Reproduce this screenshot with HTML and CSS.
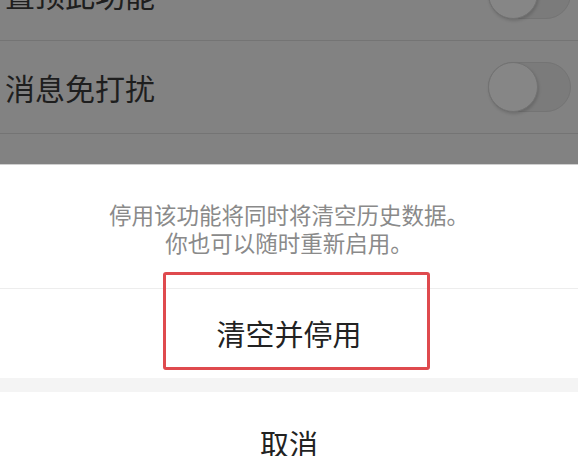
FILE: index.html
```html
<!DOCTYPE html>
<html lang="zh-CN">
<head>
    <meta charset="UTF-8">
    <meta name="viewport" content="width=device-width, initial-scale=1.0">
    <title>停用功能</title>
    <link rel="stylesheet" href="styles.css">
</head>
<body>
    <div class="screen">
        <!-- 背景设置列表（被遮罩） -->
        <div class="settings">
            <div class="setting-row">
                <span class="setting-label">置顶此功能</span>
                <span class="switch"><span class="knob"></span></span>
            </div>
            <div class="setting-row">
                <span class="setting-label">消息免打扰</span>
                <span class="switch"><span class="knob"></span></span>
            </div>
        </div>

        <!-- 底部操作菜单 -->
        <div class="action-sheet">
            <p class="sheet-tip">停用该功能将同时将清空历史数据。<br>你也可以随时重新启用。</p>
            <div class="sheet-action">
                清空并停用
                <span class="highlight-box"></span>
            </div>
            <div class="sheet-gap"></div>
            <div class="sheet-cancel">取消</div>
        </div>
    </div>
</body>
</html>
```

FILE: styles.css
```css
/* 重置默认样式 */
* {
    margin: 0;
    padding: 0;
    box-sizing: border-box;
    font-family: 'Noto Sans CJK SC', 'Noto Sans', sans-serif;
}

body {
    background: #ffffff;
    width: 578px;
    height: 456px;
    overflow: hidden;
}

.screen {
    width: 578px;
    height: 456px;
    display: flex;
    flex-direction: column;
    overflow: hidden;
}

/* 遮罩后的设置列表 */
.settings {
    height: 164px;
    flex-shrink: 0;
    background: #828282;
    overflow: hidden;
}

.setting-row {
    height: 93px;
    display: flex;
    align-items: center;
    justify-content: space-between;
    padding: 0 7px 0 5px;
    border-bottom: 1px solid #747474;
}

.setting-row:first-child {
    margin-top: -52px;
}

.setting-label {
    font-size: 30px;
    color: #1e1e1e;
    line-height: 1;
}

.switch {
    position: relative;
    width: 83px;
    height: 50px;
    border-radius: 25px;
    background: #7b7b7b;
    border: 1px solid #747474;
}

.knob {
    position: absolute;
    left: -1px;
    top: -1px;
    width: 50px;
    height: 50px;
    border-radius: 50%;
    background: #868686;
    border: 1px solid #727272;
    box-shadow: 1px 2px 3px rgba(0, 0, 0, 0.15);
}

/* 底部菜单 */
.action-sheet {
    flex: 1;
    min-height: 0;
    background: #ffffff;
    border-top: 1px solid #cfcfcf;
    display: flex;
    flex-direction: column;
}

.sheet-tip {
    height: 124px;
    flex-shrink: 0;
    display: flex;
    align-items: center;
    justify-content: center;
    text-align: center;
    font-size: 22.5px;
    line-height: 28px;
    color: #8a8a8a;
    border-bottom: 1px solid #ededed;
    padding-top: 2px;
}

.sheet-action {
    position: relative;
    height: 89px;
    flex-shrink: 0;
    display: flex;
    align-items: center;
    justify-content: center;
    font-size: 29px;
    color: #222222;
    padding-bottom: 2px;
}

.highlight-box {
    position: absolute;
    left: 163px;
    top: -17px;
    width: 267px;
    height: 98px;
    border: 3px solid #df4a4e;
    border-radius: 3px;
}

.sheet-gap {
    height: 14px;
    flex-shrink: 0;
    background: #f4f4f4;
}

.sheet-cancel {
    height: 90px;
    flex-shrink: 0;
    display: flex;
    align-items: center;
    justify-content: center;
    padding-top: 12px;
    font-size: 29px;
    color: #222222;
}
```
